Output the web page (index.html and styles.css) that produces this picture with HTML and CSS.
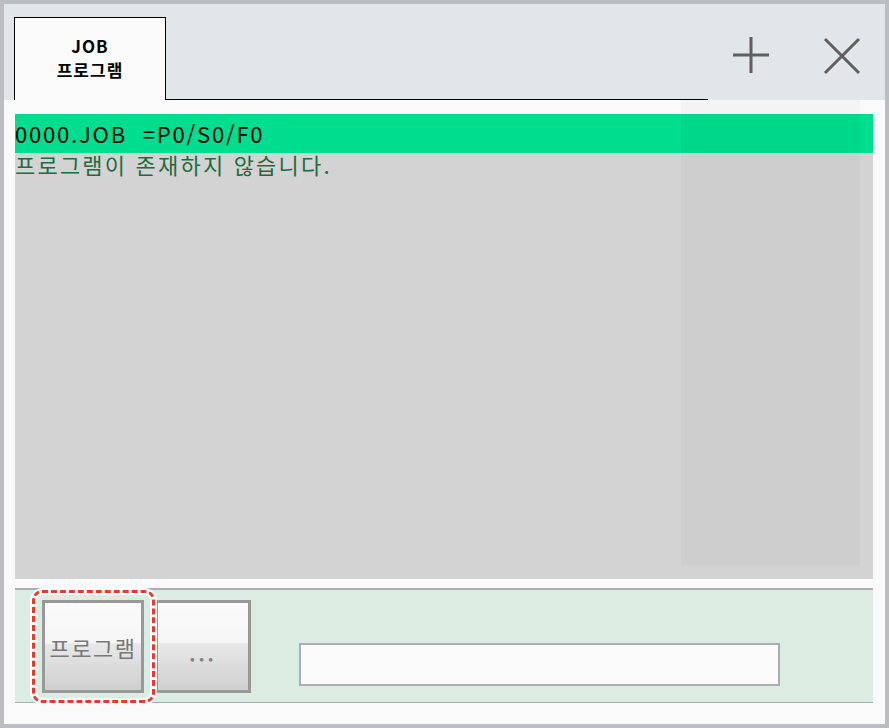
FILE: index.html
```html
<!DOCTYPE html>
<html lang="ko">
<head>
<meta charset="utf-8">
<link rel="stylesheet" href="styles.css">
</head>
<body>
<div class="window">
  <div class="header">
    <div class="tab"><span>JOB</span><span>프로그램</span></div>
    <div class="tab-line"></div>
    <div class="icons">
      <svg class="icon" width="40" height="40" viewBox="0 0 40 40"><path d="M2 20H38M20 2V38" stroke="#5f5f5f" stroke-width="3" fill="none"/></svg>
      <svg class="icon icon-x" width="40" height="40" viewBox="0 0 40 40"><path d="M3 3L37 37M37 3L3 37" stroke="#5f5f5f" stroke-width="3" fill="none"/></svg>
    </div>
  </div>
  <div class="content">
    <div class="list">
      <div class="row-selected">0000.JOB  =P0/S0/F0</div>
      <div class="row-msg">프로그램이 존재하지 않습니다.</div>
    </div>
    <div class="scroll-track"></div>
  </div>
  <div class="bottom">
    <button class="btn btn-focus">프로그램</button>
    <button class="btn btn-more">...</button>
    <div class="input"></div>
  </div>
</div>
</body>
</html>
```
FILE: styles.css
```css
html, body {
  margin: 0;
  padding: 0;
}
body {
  background: #bcbdc1;
  width: 889px;
  height: 728px;
  overflow: hidden;
  font-family: "Noto Sans CJK KR", "Noto Sans", sans-serif;
}
.window {
  margin: 4px;
  width: 881px;
  height: 720px;
  background: #fafafa;
  display: flex;
  flex-direction: column;
}
.header {
  height: 96px;
  flex: none;
  background: #e1e6e9;
  display: flex;
  box-sizing: border-box;
}
.tab {
  margin-left: 10px;
  margin-top: 13px;
  width: 152px;
  height: 83px;
  box-sizing: border-box;
  border: 1px solid #000;
  border-bottom: none;
  background: #fafafa;
  display: flex;
  flex-direction: column;
  align-items: center;
  justify-content: flex-start;
  padding-top: 16px;
  font-weight: bold;
  font-size: 17px;
  line-height: 24px;
  letter-spacing: 1px;
  color: #000;
}
.tab-line {
  width: 542px;
  align-self: flex-end;
  border-bottom: 1px solid #000;
}
.icons {
  display: flex;
  margin-left: 23px;
  margin-top: 31px;
  gap: 51px;
  align-self: flex-start;
}
.icon-x {
  margin-top: 1px;
}
.content {
  position: relative;
  height: 488px;
  flex: none;
  box-sizing: border-box;
  padding: 14px 12px 9px 11px;
}
.list {
  height: 465px;
  background: #d3d3d3;
}
.row-selected {
  height: 39px;
  background: #00dd8f;
  color: #000;
  font-size: 22px;
  line-height: 39px;
  white-space: pre;
  letter-spacing: 1.8px;
}
.row-msg {
  color: #1e6b40;
  font-size: 22px;
  line-height: 22px;
  white-space: pre;
  letter-spacing: 2.2px;
}
.scroll-track {
  position: absolute;
  left: 677px;
  top: 0;
  width: 179px;
  height: 466px;
  background: rgba(0, 0, 0, 0.025);
}
.bottom {
  margin: 0 12px 0 11px;
  height: 115px;
  box-sizing: border-box;
  border-top: 2px solid #a9aeb2;
  border-bottom: 1px solid #a9aeb2;
  background: #dbede2;
  display: flex;
  align-items: flex-start;
  padding: 10px 0 0 27px;
}
.btn {
  width: 102px;
  height: 93px;
  box-sizing: border-box;
  border: 3px solid #999;
  background: linear-gradient(to bottom, #fbfbfb 0%, #f6f6f6 46%, #e8e8e8 47%, #cfcfcf 100%);
  font-family: "Noto Sans CJK KR", "Noto Sans", sans-serif;
  font-size: 22px;
  letter-spacing: 1.5px;
  color: #777;
  padding: 0;
  margin: 0;
  position: relative;
}
.btn-focus {
  z-index: 1;
}
.btn-focus::before {
  content: "";
  position: absolute;
  top: -15px;
  left: -15px;
  right: -16px;
  bottom: -15px;
  border: 7px solid #fff;
  border-radius: 13px;
}
.btn-focus::after {
  content: "";
  position: absolute;
  top: -13px;
  left: -13px;
  right: -14px;
  bottom: -13px;
  border: 3px dashed #e8392c;
  border-radius: 10px;
}
.btn-more {
  width: 96px;
  margin-left: 11px;
  color: #808080;
  font-size: 19px;
  font-weight: bold;
  padding-top: 12px;
  letter-spacing: 3px;
}
.input {
  margin-left: 48px;
  margin-top: 43px;
  width: 481px;
  height: 43px;
  box-sizing: border-box;
  border: 2px solid #a9aeb2;
  background: #fafafa;
}
```
